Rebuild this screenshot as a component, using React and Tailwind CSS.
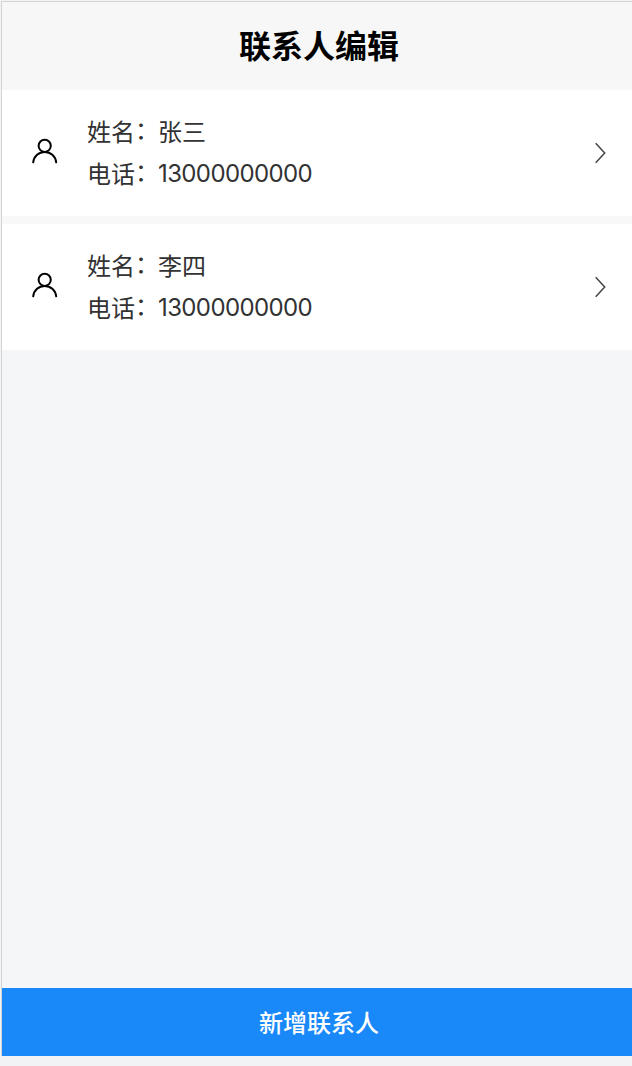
import React from "react";

const contacts = [
  { id: 1, name: "张三", tel: "13000000000" },
  { id: 2, name: "李四", tel: "13000000000" },
];

// --- Icons ---
const IconUser = () => (
  <svg
    className="w-7 h-7 mb-1 text-black"
    viewBox="0 0 28 28"
    fill="none"
    stroke="currentColor"
    strokeWidth="2"
    strokeLinecap="round"
  >
    <circle cx="13.7" cy="8.8" r="6.1" />
    <path d="M2.2 25.3C3 19 7.8 14.9 13.7 14.9S24.4 19 25.2 25.3" />
  </svg>
);

const IconArrow = () => (
  <svg
    className="w-3 h-6 text-[#444]"
    viewBox="0 0 12 24"
    fill="none"
    stroke="currentColor"
    strokeWidth="1.5"
  >
    <path d="M1.7 2.3L10.7 12L1.7 21.7" />
  </svg>
);

// --- One contact row ---
const ContactItem = ({ name, tel }) => (
  <li className="h-[126px] flex items-center bg-white pl-[29px] pr-[26px]">
    <IconUser />
    <div className="flex-1 ml-7 pb-0.5 text-2xl leading-[42px] text-[#323233]">
      <p className="flex">
        姓名<span className="-mt-0.5 w-[23px]">：</span>
        {name}
      </p>
      <p className="flex">
        电话<span className="-mt-0.5 w-[23px]">：</span>
        <span className="pt-px font-['Inter'] tracking-[-0.62px]">{tel}</span>
      </p>
    </div>
    <IconArrow />
  </li>
);

export default function App() {
  return (
    <div className="h-screen flex flex-col bg-[#f2f3f5] pt-px pl-px font-['Noto_Sans_CJK_SC',sans-serif]">
      <div className="flex-1 flex flex-col border-t border-l border-[#d4d4d4] bg-[#f5f6f8]">
        <header className="h-[88px] flex items-center justify-center bg-[#f7f7f7] pl-1 pb-1">
          <h1 className="text-[32px] leading-none font-bold text-black">
            联系人编辑
          </h1>
        </header>
        <ul className="flex flex-col gap-2 bg-[#f8f8f9]">
          {contacts.map((item) => (
            <ContactItem key={item.id} name={item.name} tel={item.tel} />
          ))}
        </ul>
        <button className="mt-auto h-[68px] w-full pl-1 bg-[#1989fa] text-white text-2xl font-medium">
          新增联系人
        </button>
      </div>
      <div className="h-2.5" />
    </div>
  );
}
